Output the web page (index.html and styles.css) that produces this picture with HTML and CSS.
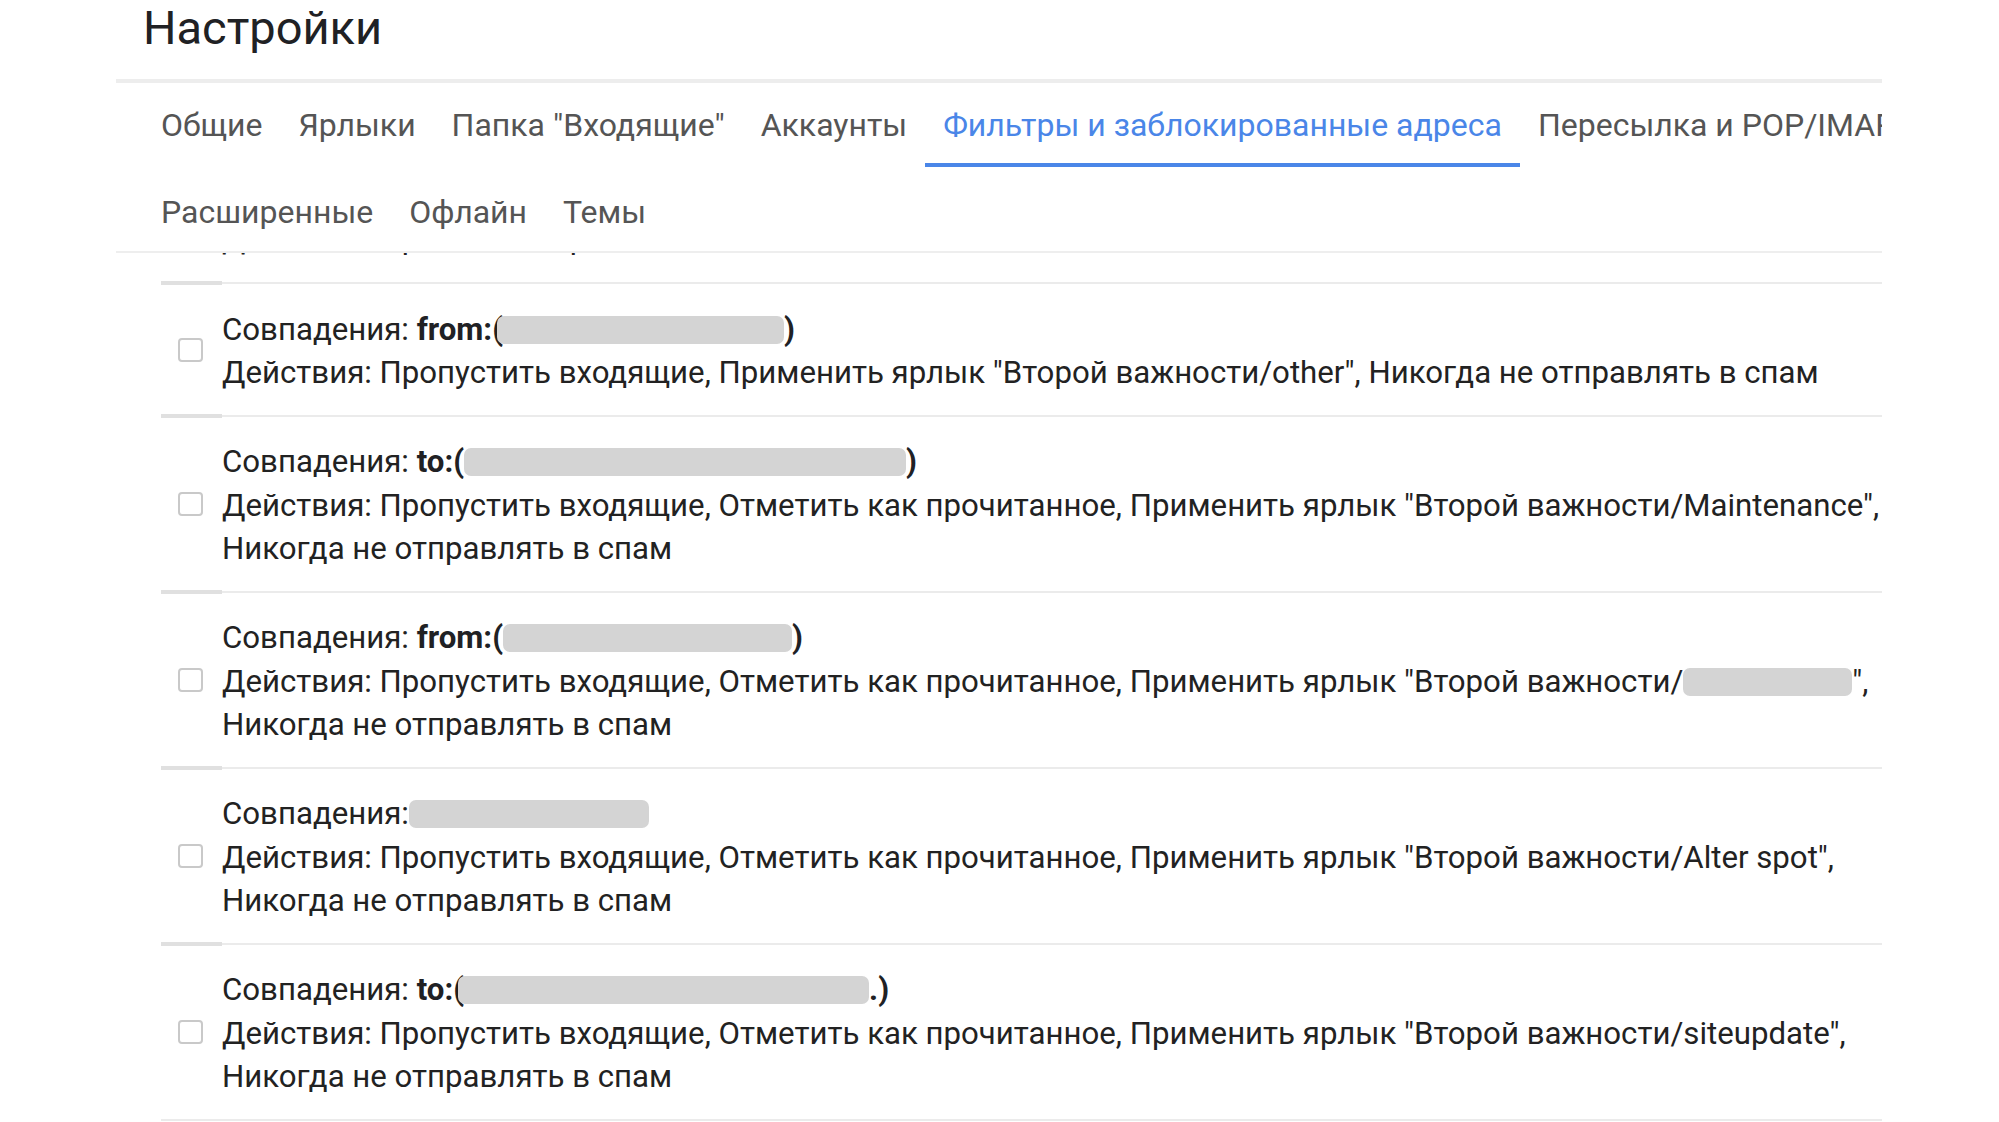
FILE: index.html
```html
<!DOCTYPE html>
<html lang="ru">
<head>
<meta charset="utf-8">
<title>Настройки</title>
<link rel="stylesheet" href="styles.css">
</head>
<body>
<div class="page">
  <h1 class="title">Настройки</h1>
  <div class="settings">
    <nav class="tabs">
      <div class="tab-row">
        <a class="tab">Общие</a>
        <a class="tab">Ярлыки</a>
        <a class="tab">Папка "Входящие"</a>
        <a class="tab">Аккаунты</a>
        <a class="tab active">Фильтры и заблокированные адреса</a>
        <a class="tab">Пересылка и POP/IMAP</a>
      </div>
      <div class="tab-row second">
        <a class="tab">Расширенные</a>
        <a class="tab">Офлайн</a>
        <a class="tab">Темы</a>
      </div>
    </nav>
    <div class="filters">
      <div class="filter filter-prev">
        <div class="check"><span class="box"></span></div>
        <div class="desc">
          <div class="line">Действия: Применить ярлык</div>
        </div>
      </div>
      <div class="filter">
        <div class="check"><span class="box"></span></div>
        <div class="desc">
          <div class="line">Совпадения: <b>from:(<span class="redact tuck w287"></span>)</b></div>
          <div class="line">Действия: Пропустить входящие, Применить ярлык "Второй важности/other", Никогда не отправлять в спам</div>
        </div>
      </div>
      <div class="filter">
        <div class="check"><span class="box"></span></div>
        <div class="desc">
          <div class="line">Совпадения: <b>to:(<span class="redact w442"></span>)</b></div>
          <div class="line">Действия: Пропустить входящие, Отметить как прочитанное, Применить ярлык "Второй важности/Maintenance",</div>
          <div class="line">Никогда не отправлять в спам</div>
        </div>
      </div>
      <div class="filter">
        <div class="check"><span class="box"></span></div>
        <div class="desc">
          <div class="line">Совпадения: <b>from:(<span class="redact w289"></span>)</b></div>
          <div class="line">Действия: Пропустить входящие, Отметить как прочитанное, Применить ярлык "Второй важности/<span class="redact w169"></span>",</div>
          <div class="line">Никогда не отправлять в спам</div>
        </div>
      </div>
      <div class="filter">
        <div class="check"><span class="box"></span></div>
        <div class="desc">
          <div class="line">Совпадения:<span class="redact w240"></span></div>
          <div class="line">Действия: Пропустить входящие, Отметить как прочитанное, Применить ярлык "Второй важности/Alter spot",</div>
          <div class="line">Никогда не отправлять в спам</div>
        </div>
      </div>
      <div class="filter last">
        <div class="check"><span class="box"></span></div>
        <div class="desc">
          <div class="line">Совпадения: <b>to:(<span class="redact tuck w411"></span>.)</b></div>
          <div class="line">Действия: Пропустить входящие, Отметить как прочитанное, Применить ярлык "Второй важности/siteupdate",</div>
          <div class="line">Никогда не отправлять в спам</div>
        </div>
      </div>
    </div>
  </div>
</div>
</body>
</html>
```

FILE: styles.css
```css
* { box-sizing: border-box; }
html, body {
  margin: 0;
  padding: 0;
  background: #ffffff;
}
body {
  font-family: Roboto, "Noto Sans", "Liberation Sans", sans-serif;
  color: #222222;
  overflow: hidden;
  height: 1122px;
}
.page {
  width: 1999px;
}
.title {
  margin: 0 0 23px 0;
  padding-left: 143px;
  font-size: 47px;
  line-height: 56px;
  font-weight: 400;
  color: #202124;
}
.settings {
  margin-left: 116px;
  width: 1766px;
  border-top: 4px solid #ededed;
}
.tabs {
  padding-left: 27px;
  border-bottom: 2px solid #eeeeee;
}
.tab-row {
  display: flex;
  white-space: nowrap;
  overflow: hidden;
}
.tab {
  display: block;
  flex: none;
  padding: 22px 18px 18px;
  line-height: 40px;
  font-size: 32px;
  color: #555555;
  border-bottom: 4px solid transparent;
}
.tab-row.second .tab {
  padding-top: 25px;
  padding-bottom: 15px;
}
.tab.active {
  color: #4a86e8;
  border-bottom-color: #4a86e8;
}
.filters {
  height: 869px;
  overflow: hidden;
  padding-left: 45px;
}
.filter {
  display: grid;
  grid-template-columns: 61px 1fr;
  align-items: center;
  border-top: 2px solid #ebebeb;
}
.filter.last {
  border-bottom: 2px solid #ebebeb;
}
.filter-prev {
  margin-top: -60px;
}
.filter-prev .desc {
  padding: 21.5px 0 22px;
}
.check {
  align-self: stretch;
  margin-top: -3px;
  border-top: 4px solid #e0e0e0;
  display: flex;
  align-items: center;
  padding-left: 17px;
}
.box {
  display: block;
  width: 25px;
  height: 24px;
  border: 2px solid #c9c9c9;
  border-radius: 4px;
}
.desc {
  padding: 23.5px 0 20px;
  font-size: 31.2px;
  line-height: 43.5px;
  white-space: nowrap;
}
.desc b {
  font-weight: 700;
  color: #202124;
}
.redact {
  display: inline-block;
  height: 28px;
  vertical-align: -4px;
  background: #d4d4d4;
  border-radius: 7px;
}
.redact.tuck {
  margin-left: -6px;
}
.w287 { width: 287px; }
.w442 { width: 442px; }
.w289 { width: 289px; }
.w169 { width: 169px; }
.w240 { width: 240px; }
.w411 { width: 411px; }
```
